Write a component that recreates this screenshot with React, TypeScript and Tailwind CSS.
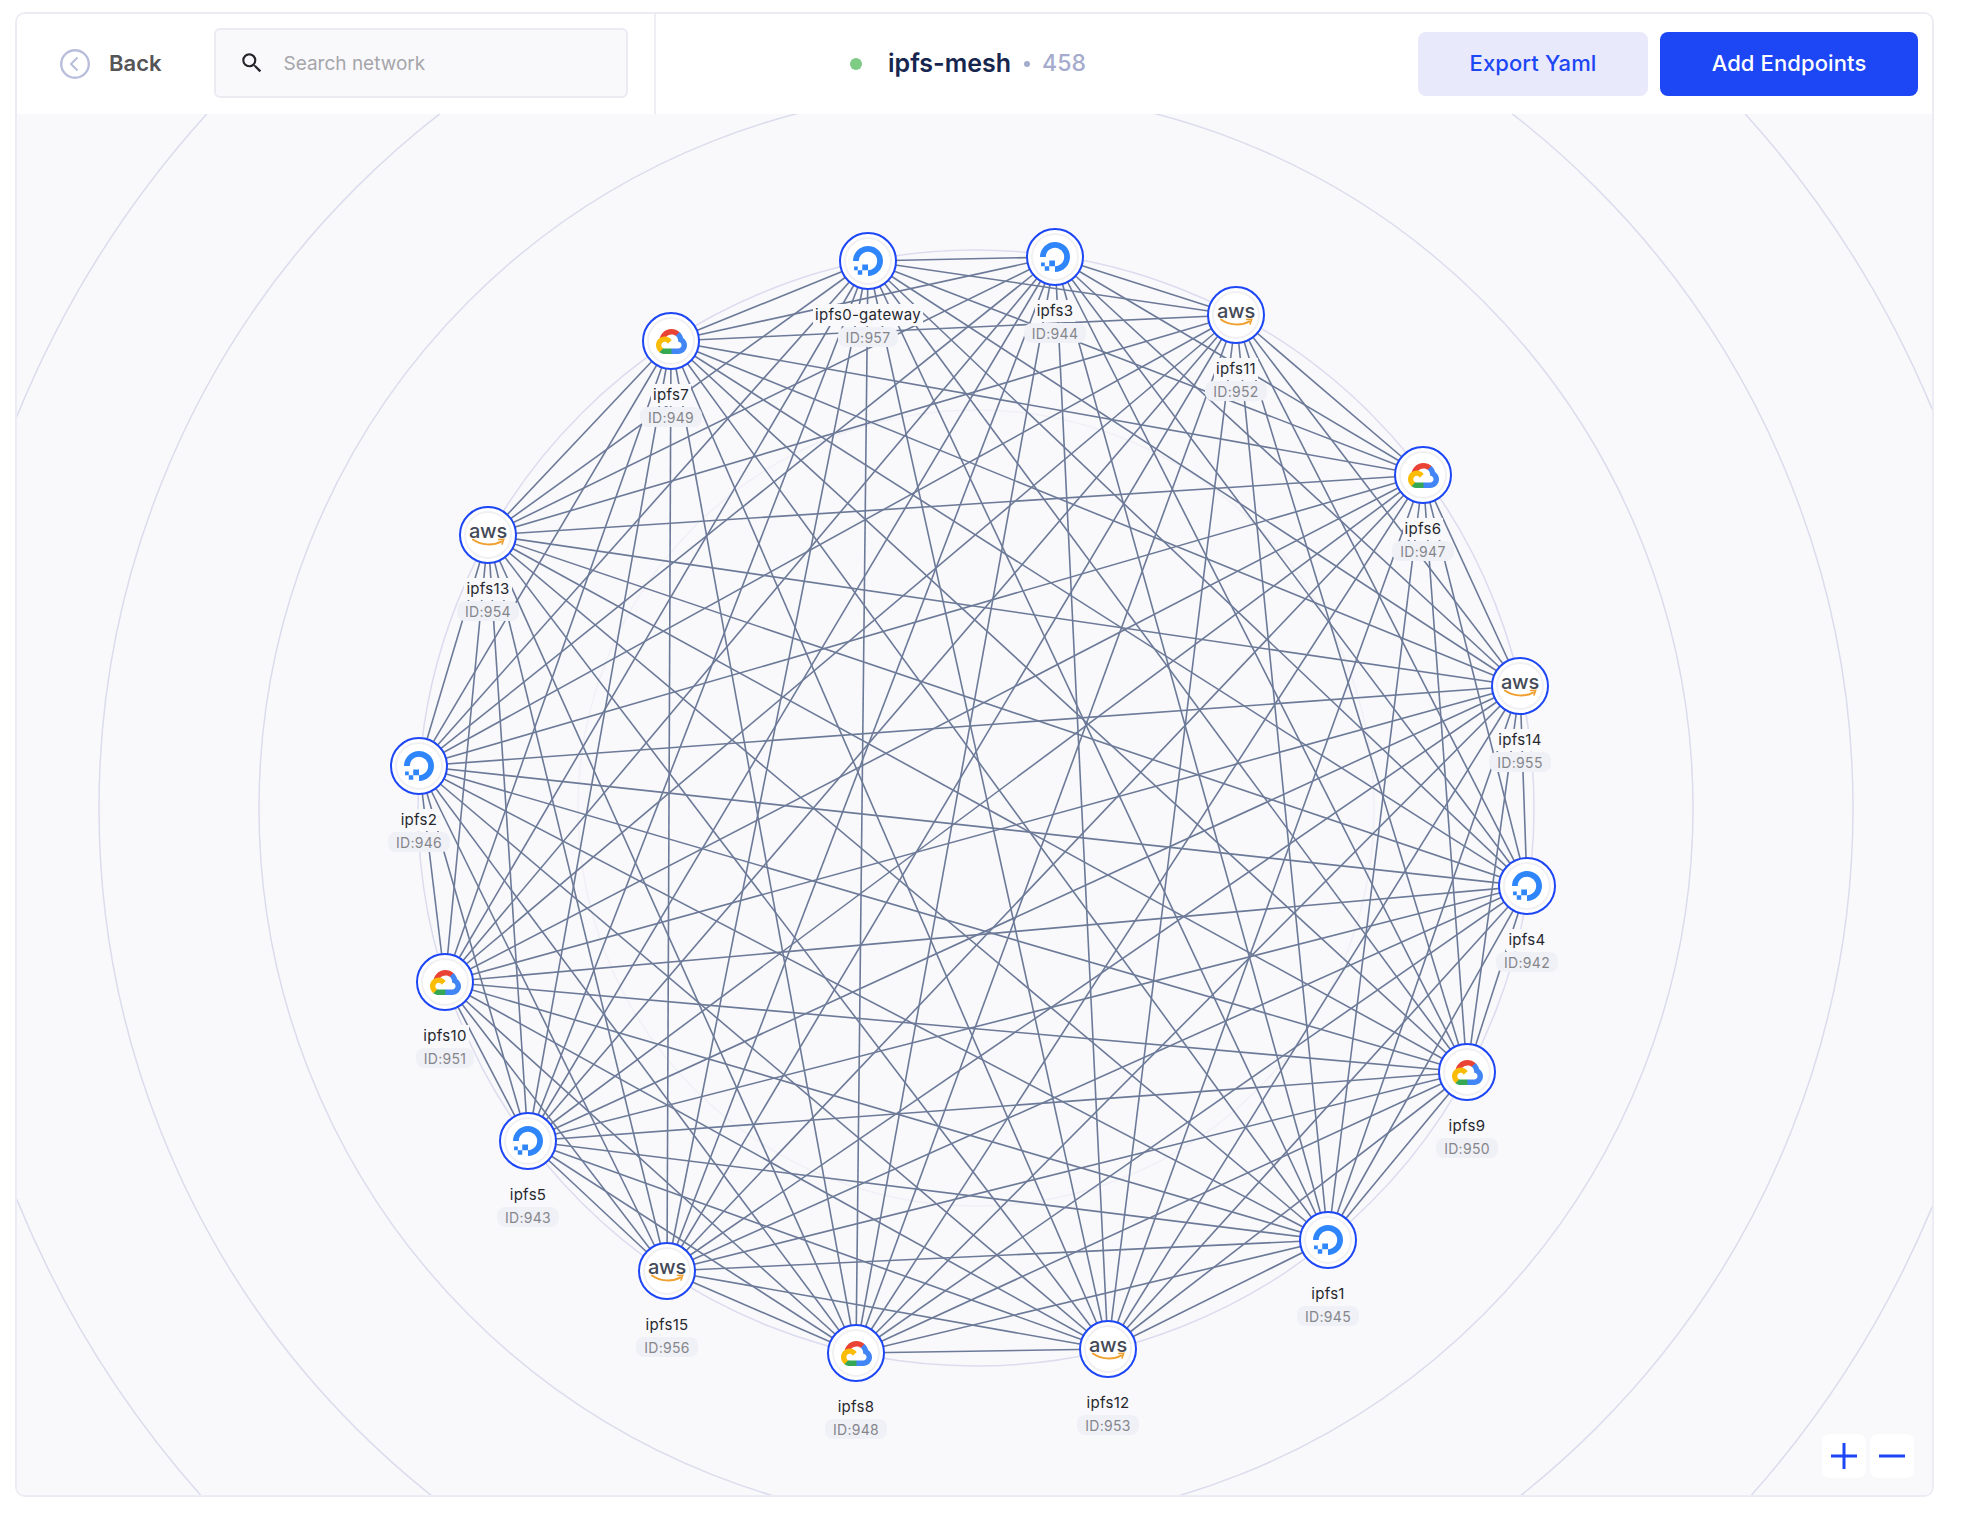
import { MdSearch } from "react-icons/md";
import { SiDigitalocean } from "react-icons/si";

type Cloud = "do" | "gcp" | "aws";

type MeshNode = {
  name: string;
  id: number;
  x: number;
  y: number;
  cloud: Cloud;
};

// page coordinates of the canvas top-left corner
const ORIGIN_X = 17;
const ORIGIN_Y = 114;
const CENTER_X = 976;
const CENTER_Y = 808;

const nodes: MeshNode[] = [
  { name: "ipfs0-gateway", id: 957, x: 868, y: 261, cloud: "do" },
  { name: "ipfs3", id: 944, x: 1055, y: 257, cloud: "do" },
  { name: "ipfs11", id: 952, x: 1236, y: 315, cloud: "aws" },
  { name: "ipfs6", id: 947, x: 1423, y: 475, cloud: "gcp" },
  { name: "ipfs14", id: 955, x: 1520, y: 686, cloud: "aws" },
  { name: "ipfs4", id: 942, x: 1527, y: 886, cloud: "do" },
  { name: "ipfs9", id: 950, x: 1467, y: 1072, cloud: "gcp" },
  { name: "ipfs1", id: 945, x: 1328, y: 1240, cloud: "do" },
  { name: "ipfs12", id: 953, x: 1108, y: 1349, cloud: "aws" },
  { name: "ipfs8", id: 948, x: 856, y: 1353, cloud: "gcp" },
  { name: "ipfs15", id: 956, x: 667, y: 1271, cloud: "aws" },
  { name: "ipfs5", id: 943, x: 528, y: 1141, cloud: "do" },
  { name: "ipfs10", id: 951, x: 445, y: 982, cloud: "gcp" },
  { name: "ipfs2", id: 946, x: 419, y: 766, cloud: "do" },
  { name: "ipfs13", id: 954, x: 488, y: 535, cloud: "aws" },
  { name: "ipfs7", id: 949, x: 671, y: 341, cloud: "gcp" },
];

const GoogleCloudLogo = () => (
  <svg viewBox="0 0 256 206" className="w-[31px] h-[25px]">
    <path fill="#EA4335" d="M170.25 56.82l22.25-22.25 1.49-9.37C153.44-11.68 88.98-7.5 52.42 33.92 42.27 45.42 34.73 59.76 30.72 74.57l7.97-1.12 44.5-7.34 3.44-3.51c19.8-21.74 53.27-24.67 76.13-6.17l7.49.39z" />
    <path fill="#4285F4" d="M224.2 73.92c-5.11-18.84-15.62-35.77-30.22-48.72l-31.23 31.23c13.19 10.78 20.7 27.01 20.38 44.04v5.54c15.35 0 27.8 12.44 27.8 27.8 0 15.35-12.45 27.48-27.8 27.48h-55.67l-5.47 5.93v33.34l5.47 5.23h55.67c39.93.31 72.55-31.49 72.86-71.42.19-24.2-11.74-46.89-31.79-60.45" />
    <path fill="#34A853" d="M71.87 205.8h55.59v-44.51H71.87c-3.96 0-7.8-.85-11.4-2.5l-7.89 2.42-22.41 22.25-1.95 7.57c12.57 9.49 27.9 14.83 43.65 14.77" />
    <path fill="#FBBC05" d="M71.87 61.43C31.94 61.66-.24 94.23 0 134.16c.13 22.3 10.55 43.29 28.22 56.88l32.25-32.25c-13.99-6.32-20.21-22.79-13.89-36.78 6.32-13.99 22.79-20.21 36.78-13.89 6.17 2.79 11.1 7.72 13.89 13.89l32.25-32.25C115.77 71.83 94.45 61.34 71.87 61.43" />
  </svg>
);

const AwsLogo = () => (
  <div className="flex flex-col items-center mt-[1px]">
    <span className="font-['Inter',sans-serif] text-[20px] leading-[14px] font-medium tracking-[-0.2px] text-[#444a58]">
      aws
    </span>
    <svg viewBox="0 0 34 9" className="w-[33px] h-[9px]">
      <path d="M1 1.5C9 7.5 22 8 30 3.5" fill="none" stroke="#f0a02f" strokeWidth="2" strokeLinecap="round" />
      <path d="M27.5 1.4L32.6 1.2L31 6" fill="none" stroke="#f0a02f" strokeWidth="1.7" strokeLinecap="round" />
    </svg>
  </div>
);

const CloudLogo = ({ cloud }: { cloud: Cloud }) => {
  if (cloud === "do") return <SiDigitalocean size={30} color="#2f86fb" />;
  if (cloud === "gcp") return <GoogleCloudLogo />;
  return <AwsLogo />;
};

const NodeMarker = ({ node }: { node: MeshNode }) => (
  <div
    className="absolute flex flex-col items-center w-[160px] -ml-[80px] -mt-[29px]"
    style={{ left: node.x - ORIGIN_X, top: node.y - ORIGIN_Y }}
  >
    <div className="w-[58px] h-[58px] rounded-full bg-white border-2 border-[#1d46f5] flex items-center justify-center">
      <div className="w-[48px] h-[48px] rounded-full bg-white border-2 border-[#f1f1f4] flex items-center justify-center">
        <CloudLogo cloud={node.cloud} />
      </div>
    </div>
    <div className="mt-[14px] h-[22px] px-[2px] bg-[#f9f9fc] flex items-center text-[15px] text-[#26282e] tracking-[0.3px]">
      {node.name}
    </div>
    <div className="mt-[1px] h-[20px] px-[8px] rounded-[8px] bg-[#f0f1f6] flex items-center text-[14px] text-[#85868c] tracking-[0.3px]">
      ID:{node.id}
    </div>
  </div>
);

const Mesh = () => {
  const lines: { a: MeshNode; b: MeshNode }[] = [];
  nodes.forEach((a, i) => {
    nodes.slice(i + 1).forEach((b) => lines.push({ a, b }));
  });

  return (
    <svg
      className="absolute inset-0"
      width={1916}
      height={1382}
      viewBox={`${ORIGIN_X} ${ORIGIN_Y} 1916 1382`}
    >
      {[1036, 877, 717].map((r) => (
        <circle key={r} cx={CENTER_X} cy={CENTER_Y} r={r} fill="none" stroke="#dbdcec" strokeWidth={1.5} />
      ))}
      <circle cx={CENTER_X} cy={CENTER_Y} r={558} fill="none" stroke="#dddcee" strokeWidth={1.5} />
      <circle cx={CENTER_X} cy={CENTER_Y} r={398} fill="none" stroke="#f0f0f6" strokeWidth={1.5} />
      {lines.map(({ a, b }) => (
        <line
          key={`${a.name}-${b.name}`}
          x1={a.x}
          y1={a.y}
          x2={b.x}
          y2={b.y}
          stroke="#6c7a98"
          strokeWidth={1.6}
        />
      ))}
    </svg>
  );
};

export default function App() {
  return (
    <div className="w-[1966px] h-[1526px] bg-white pt-[12px] pl-[15px] font-['Inter',sans-serif] overflow-hidden">
      <div className="w-[1919px] h-[1485px] border-2 border-[#ecedf4] rounded-[10px] overflow-hidden flex flex-col">
        <header className="h-[100px] shrink-0 bg-white flex items-center">
          <div className="w-[639px] h-full shrink-0 border-r-2 border-[#eeeef5] flex items-center pl-[43px]">
            <button className="flex items-center gap-[19px]">
              <svg viewBox="0 0 30 30" className="w-[30px] h-[30px]">
                <circle cx="15" cy="15" r="13.8" fill="none" stroke="#b9bedb" strokeWidth="2.4" />
                <path d="M17.5 8.5L11 15L17.5 21.5" fill="none" stroke="#b9bedb" strokeWidth="2" />
              </svg>
              <span className="text-[22px] font-semibold text-[#555558] -mt-[2px]">Back</span>
            </button>
            <div className="ml-[53px] w-[414px] h-[70px] -mt-[3px] rounded-[6px] bg-[#f9f9fc] border-2 border-[#ebebf3] flex items-center pl-[23px]">
              <MdSearch size={26} color="#26262a" className="mt-[1px]" />
              <span className="ml-[18px] mt-[3px] text-[19px] text-[#a5a5aa]">Search network</span>
            </div>
          </div>
          <div className="flex-1 flex items-center pl-[194px] -mt-[1px]">
            <span className="w-[12px] h-[12px] rounded-full bg-[#7dcb85]" />
            <span className="ml-[26px] text-[25px] font-semibold text-[#17264f]">ipfs-mesh</span>
            <span className="ml-[13px] w-[6px] h-[6px] rounded-full bg-[#a5abcc]" />
            <span className="ml-[12px] text-[23px] font-medium text-[#a5abcc]">458</span>
          </div>
          <div className="flex items-center gap-[12px] pr-[14px] -mt-[1px]">
            <button className="w-[230px] h-[64px] rounded-[8px] bg-[#e8eafb] text-[22px] font-medium tracking-[0.1px] text-[#1d46f5]">
              Export Yaml
            </button>
            <button className="w-[258px] h-[64px] rounded-[8px] bg-[#1d46f5] text-[22px] font-medium tracking-[0.1px] text-white">
              Add Endpoints
            </button>
          </div>
        </header>
        <main className="relative flex-1 bg-[#f9f9fc] overflow-hidden">
          <Mesh />
          {nodes.map((node) => (
            <NodeMarker key={node.name} node={node} />
          ))}
          <div className="absolute right-[18px] bottom-[17px] flex gap-[4px]">
            <button className="w-[44px] h-[44px] rounded-[8px] bg-white flex items-center justify-center">
              <svg viewBox="0 0 26 26" className="w-[26px] h-[26px]">
                <path d="M0 13H26M13 0V26" stroke="#1d46f5" strokeWidth="3" />
              </svg>
            </button>
            <button className="w-[44px] h-[44px] rounded-[8px] bg-white flex items-center justify-center">
              <svg viewBox="0 0 26 26" className="w-[26px] h-[26px]">
                <path d="M0 13H26" stroke="#1d46f5" strokeWidth="3" />
              </svg>
            </button>
          </div>
        </main>
      </div>
    </div>
  );
}
